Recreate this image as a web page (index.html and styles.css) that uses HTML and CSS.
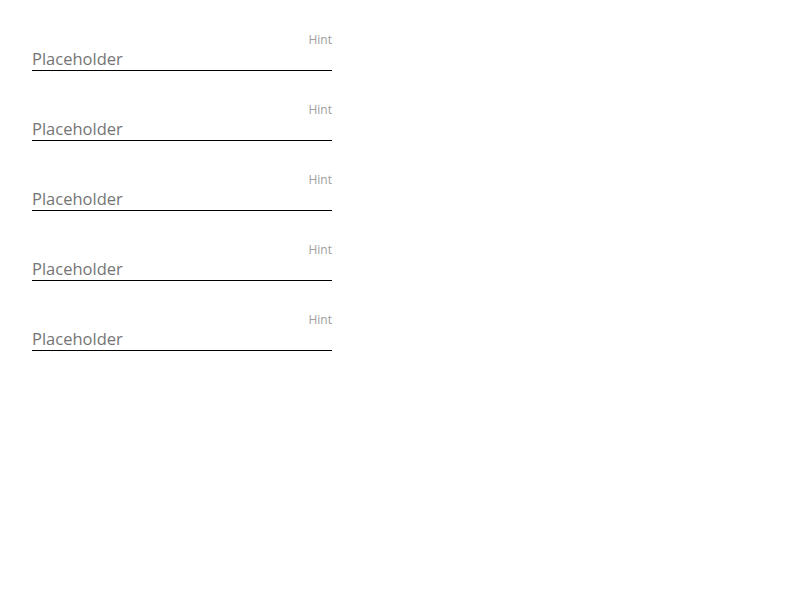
FILE: index.html
```html
<!DOCTYPE html>
<html>
<head>
<meta charset="utf-8">
<link rel="stylesheet" href="styles.css">
</head>
<body>
<div class="form">
  <label class="field"><span class="hint">Hint</span><input class="input" type="text" placeholder="Placeholder"></label>
  <label class="field"><span class="hint">Hint</span><input class="input" type="text" placeholder="Placeholder"></label>
  <label class="field"><span class="hint">Hint</span><input class="input" type="text" placeholder="Placeholder"></label>
  <label class="field"><span class="hint">Hint</span><input class="input" type="text" placeholder="Placeholder"></label>
  <label class="field"><span class="hint">Hint</span><input class="input" type="text" placeholder="Placeholder"></label>
</div>
</body>
</html>
```
FILE: styles.css
```css
html, body {
  margin: 0;
  padding: 0;
  background: #fff;
}
.form {
  display: flex;
  flex-direction: column;
  gap: 31px;
  padding: 32px 0 0 32px;
  width: 300px;
  font-family: "Open Sans", "Noto Sans", sans-serif;
}
.field {
  display: flex;
  flex-direction: column;
}
.hint {
  align-self: flex-end;
  font-size: 12px;
  line-height: 15px;
  color: #a0a0a0;
}
.input {
  display: block;
  width: 100%;
  box-sizing: border-box;
  border: 0;
  border-bottom: 1px solid #000;
  padding: 0;
  margin: 0;
  height: 24px;
  font-family: inherit;
  font-size: 16.5px;
  line-height: 23px;
  color: #333;
  outline: none;
  background: transparent;
}
.input::placeholder {
  color: #757575;
  opacity: 1;
}
```
